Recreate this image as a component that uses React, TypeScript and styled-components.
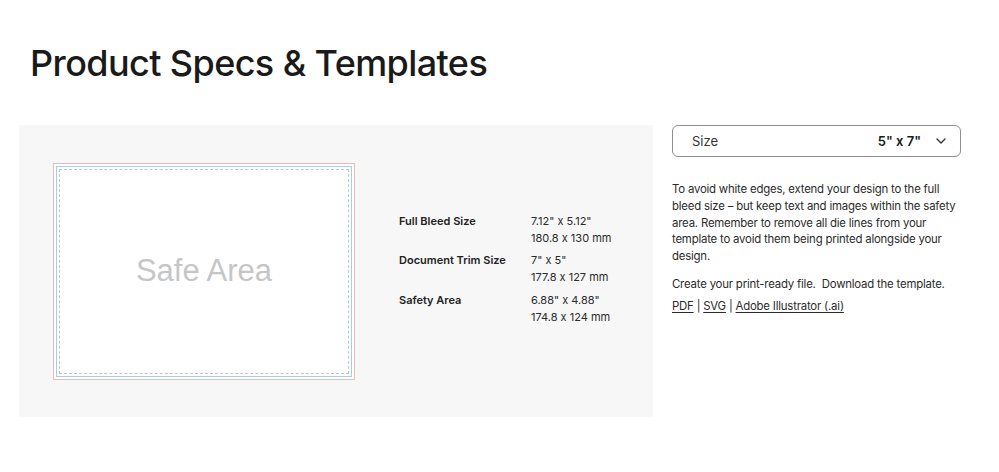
import React from 'react';
import styled, { createGlobalStyle } from 'styled-components';

const GlobalStyle = createGlobalStyle`
  body {
    margin: 0;
    background: #ffffff;
    font-family: Inter, "Noto Sans", sans-serif;
    font-feature-settings: "calt" 0;
    color: #222222;
  }
`;

const Page = styled.div`
  padding: 37px 38px 0 19px;
`;

const Title = styled.h1`
  margin: 0 0 36px 11px;
  font-size: 36px;
  line-height: 52px;
  font-weight: 500;
  letter-spacing: -0.6px;
  color: #1a1a1a;
`;

const Content = styled.div`
  display: flex;
  align-items: flex-start;
  gap: 19px;
`;

const Preview = styled.div`
  width: 634px;
  height: 292px;
  background: #f7f7f7;
  display: flex;
  align-items: center;
  padding-left: 34px;
  box-sizing: border-box;
  gap: 44px;
`;

const BleedCard = styled.div`
  width: 302px;
  height: 217px;
  box-sizing: border-box;
  background: #ffffff;
  border: 1px solid #eab9b9;
  padding: 2px;
`;

const TrimLine = styled.div`
  height: 100%;
  box-sizing: border-box;
  border: 1px solid #9fd3e8;
  padding: 2px;
`;

const SafeLine = styled.div`
  height: 100%;
  box-sizing: border-box;
  border: 1px dashed #c4c4c4;
  display: flex;
  align-items: center;
  justify-content: center;
  font-family: "Liberation Sans", Arial, sans-serif;
  font-size: 31px;
  color: #c6c6c6;
`;

const Specs = styled.div`
  display: grid;
  grid-template-columns: 132px auto;
  row-gap: 5.5px;
  font-size: 11px;
  line-height: 17px;
  margin-top: -4px;
`;

const SpecLabel = styled.div`
  font-weight: 600;
  color: #222222;
`;

const SpecValue = styled.div`
  color: #2b2b2b;
`;

const Side = styled.div`
  width: 289px;
  display: flex;
  flex-direction: column;
`;

const Select = styled.div`
  height: 32px;
  box-sizing: border-box;
  border: 1px solid #8f8f8f;
  border-radius: 6px;
  display: flex;
  align-items: center;
  padding: 0 14px 0 19px;
  font-size: 13px;
  color: #333333;
`;

const SelectLabel = styled.span`
  flex: 1;
`;

const SelectValue = styled.span`
  font-weight: 600;
  color: #1a1a1a;
  margin-right: 15px;
`;

const Paragraph = styled.p`
  margin: 0;
  font-size: 11.4px;
  letter-spacing: -0.2px;
  line-height: 16.8px;
  color: #2b2b2b;
`;

const Intro = styled(Paragraph)`
  margin-top: 24px;
`;

const Prompt = styled(Paragraph)`
  margin-top: 11px;
  white-space: pre;
`;

const Links = styled(Paragraph)`
  margin-top: 5px;
`;

const Link = styled.a`
  color: #2b2b2b;
  text-decoration: underline;
  text-underline-offset: 2px;
`;

const Chevron = () => (
  <svg width="10" height="6" viewBox="0 0 10 6" fill="none">
    <path d="M1 1l4 4 4-4" stroke="#333" strokeWidth="1.4" strokeLinecap="round" strokeLinejoin="round" />
  </svg>
);

const specs = [
  { label: 'Full Bleed Size', values: ['7.12" x 5.12"', '180.8 x 130 mm'] },
  { label: 'Document Trim Size', values: ['7" x 5"', '177.8 x 127 mm'] },
  { label: 'Safety Area', values: ['6.88" x 4.88"', '174.8 x 124 mm'] },
];

export default function App() {
  return (
    <>
      <GlobalStyle />
      <Page>
        <Title>Product Specs &amp; Templates</Title>
        <Content>
          <Preview>
            <BleedCard>
              <TrimLine>
                <SafeLine>Safe Area</SafeLine>
              </TrimLine>
            </BleedCard>
            <Specs>
              {specs.map((s) => (
                <React.Fragment key={s.label}>
                  <SpecLabel>{s.label}</SpecLabel>
                  <SpecValue>
                    {s.values[0]}
                    <br />
                    {s.values[1]}
                  </SpecValue>
                </React.Fragment>
              ))}
            </Specs>
          </Preview>
          <Side>
            <Select>
              <SelectLabel>Size</SelectLabel>
              <SelectValue>5" x 7"</SelectValue>
              <Chevron />
            </Select>
            <Intro>
              To avoid white edges, extend your design to the full bleed size – but keep text and
              images within the safety area. Remember to remove all die lines from your template to
              avoid them being printed alongside your design.
            </Intro>
            <Prompt>{'Create your print-ready file.  Download the template.'}</Prompt>
            <Links>
              <Link href="#">PDF</Link> | <Link href="#">SVG</Link> |{' '}
              <Link href="#">Adobe Illustrator (.ai)</Link>
            </Links>
          </Side>
        </Content>
      </Page>
    </>
  );
}
